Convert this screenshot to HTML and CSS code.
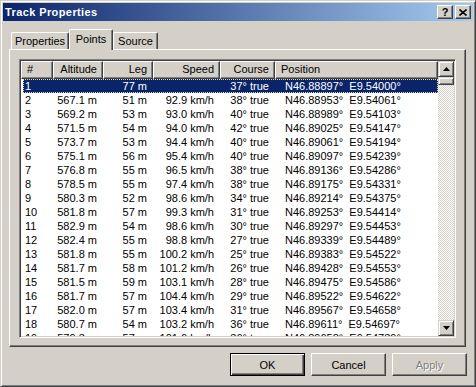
FILE: index.html
```html
<!DOCTYPE html>
<html lang="en">
<head>
    <meta charset="UTF-8">
    <title>Track Properties</title>
    <link rel="stylesheet" href="styles.css">
</head>
<body>
    <div class="window">
        <div class="titlebar">
            <span class="title">Track Properties</span>
            <div class="caption-buttons">
                <div class="cap-btn">?</div>
                <div class="cap-btn">
                    <svg width="8" height="7" viewBox="0 0 8 7"><path d="M0.5 0.5 L7.5 6.5 M7.5 0.5 L0.5 6.5" stroke="#000" stroke-width="1.6" fill="none"/></svg>
                </div>
            </div>
        </div>

        <div class="content">
            <div class="tabs">
                <div class="tab tab-properties">Properties</div>
                <div class="tab tab-points selected">Points</div>
                <div class="tab tab-source">Source</div>
            </div>

            <div class="panel">
                <div class="listview">
                    <div class="list-main">
                        <div class="list-header">
                            <div class="hcell">#</div>
                            <div class="hcell right">Altitude</div>
                            <div class="hcell right">Leg</div>
                            <div class="hcell right">Speed</div>
                            <div class="hcell right">Course</div>
                            <div class="hcell">Position</div>
                        </div>
                        <div class="list-rows" id="rows"></div>
                    </div>
                    <div class="scrollbar">
                        <div class="sb-btn">
                            <svg width="7" height="4" viewBox="0 0 7 4"><polygon points="3.5,0 7,4 0,4" fill="#000"/></svg>
                        </div>
                        <div class="sb-thumb"></div>
                        <div class="sb-track"></div>
                        <div class="sb-btn">
                            <svg width="7" height="4" viewBox="0 0 7 4"><polygon points="0,0 7,0 3.5,4" fill="#000"/></svg>
                        </div>
                    </div>
                </div>
            </div>

            <div class="footer">
                <button class="btn default">OK</button>
                <button class="btn">Cancel</button>
                <button class="btn disabled">Apply</button>
            </div>
        </div>
    </div>

    <script>
    const points = [
        ["1", "", "77 m", "", "37° true", "N46.88897°  E9.54000°"],
        ["2", "567.1 m", "51 m", "92.9 km/h", "38° true", "N46.88953°  E9.54061°"],
        ["3", "569.2 m", "53 m", "93.0 km/h", "40° true", "N46.88989°  E9.54103°"],
        ["4", "571.5 m", "54 m", "94.0 km/h", "42° true", "N46.89025°  E9.54147°"],
        ["5", "573.7 m", "53 m", "94.4 km/h", "40° true", "N46.89061°  E9.54194°"],
        ["6", "575.1 m", "56 m", "95.4 km/h", "40° true", "N46.89097°  E9.54239°"],
        ["7", "576.8 m", "55 m", "96.5 km/h", "38° true", "N46.89136°  E9.54286°"],
        ["8", "578.5 m", "55 m", "97.4 km/h", "38° true", "N46.89175°  E9.54331°"],
        ["9", "580.3 m", "52 m", "98.6 km/h", "34° true", "N46.89214°  E9.54375°"],
        ["10", "581.8 m", "57 m", "99.3 km/h", "31° true", "N46.89253°  E9.54414°"],
        ["11", "582.9 m", "54 m", "98.6 km/h", "30° true", "N46.89297°  E9.54453°"],
        ["12", "582.4 m", "55 m", "98.8 km/h", "27° true", "N46.89339°  E9.54489°"],
        ["13", "581.8 m", "55 m", "100.2 km/h", "25° true", "N46.89383°  E9.54522°"],
        ["14", "581.7 m", "58 m", "101.2 km/h", "26° true", "N46.89428°  E9.54553°"],
        ["15", "581.5 m", "59 m", "103.1 km/h", "28° true", "N46.89475°  E9.54586°"],
        ["16", "581.7 m", "57 m", "104.4 km/h", "29° true", "N46.89522°  E9.54622°"],
        ["17", "582.0 m", "57 m", "103.4 km/h", "31° true", "N46.89567°  E9.54658°"],
        ["18", "580.7 m", "54 m", "103.2 km/h", "36° true", "N46.89611°  E9.54697°"],
        ["19", "579.3 m", "57 m", "101.6 km/h", "36° true", "N46.89658°  E9.54739°"]
    ];

    const rowsEl = document.getElementById("rows");
    const align = ["", "right", "right", "right", "right", "pos"];

    points.forEach((p, i) => {
        const row = document.createElement("div");
        row.className = "row" + (i === 0 ? " selected" : "");
        p.forEach((val, c) => {
            const cell = document.createElement("div");
            cell.className = "cell " + align[c];
            cell.textContent = val;
            row.appendChild(cell);
        });
        rowsEl.appendChild(row);
    });
    </script>
</body>
</html>
```

FILE: styles.css
```css
body {
  margin: 0;
  font-family: "Liberation Sans", Arial, sans-serif;
  font-size: 11px;
  background: #d4d0c8;
}

/* Dialog frame */
.window {
  width: 476px;
  height: 387px;
  box-sizing: border-box;
  background: #d4d0c8;
  border: 1px solid;
  border-color: #d4d0c8 #404040 #404040 #d4d0c8;
  box-shadow: inset 1px 1px #fff, inset -1px -1px #808080;
  padding: 2px;
}

.titlebar {
  height: 18px;
  box-sizing: border-box;
  background: linear-gradient(to right, #0a246a, #a6caf0);
  display: flex;
  align-items: center;
  justify-content: space-between;
  padding: 0 2px 0 2px;
}
.title {
  color: #fff;
  font-weight: bold;
  font-size: 11px;
  letter-spacing: 0.4px;
}
.caption-buttons {
  display: flex;
  gap: 2px;
}
.cap-btn {
  width: 16px;
  height: 14px;
  box-sizing: border-box;
  background: #d4d0c8;
  border: 1px solid;
  border-color: #fff #404040 #404040 #fff;
  box-shadow: inset -1px -1px #808080;
  display: flex;
  align-items: center;
  justify-content: center;
  font-weight: bold;
  font-size: 11px;
  line-height: 1;
  color: #000;
}

/* Tabs + page */
.content {
  padding: 8px 7px 0 6px;
}
.tabs {
  position: relative;
  z-index: 1;
  display: flex;
  align-items: flex-end;
  height: 21px;
  margin-bottom: -1px;
  padding-left: 2px;
}
.tab {
  box-sizing: border-box;
  height: 17px;
  margin-bottom: 1px;
  background: #d4d0c8;
  border-left: 1px solid #fff;
  border-top: 1px solid #fff;
  border-right: 1px solid #404040;
  box-shadow: inset -1px 0 #808080;
  border-radius: 2px 2px 0 0;
  text-align: center;
  line-height: 16px;
}
.tab-properties { width: 58px; }
.tab-points { width: 44px; }
.tab-source { width: 45px; }
.tab.selected {
  height: 21px;
  margin-bottom: 0;
  line-height: 18px;
}

.panel {
  width: 457px;
  height: 298px;
  box-sizing: border-box;
  border: 1px solid;
  border-color: #fff #404040 #404040 #fff;
  box-shadow: inset -1px -1px #808080;
  padding: 9px 0 0 9px;
}

/* List view */
.listview {
  width: 437px;
  height: 279px;
  box-sizing: border-box;
  border: 1px solid;
  border-color: #808080 #fff #fff #808080;
  box-shadow: inset 1px 1px #404040, inset -1px -1px #d4d0c8;
  padding: 1px;
  background: #fff;
  display: flex;
}
.list-main {
  flex: 1;
  display: flex;
  flex-direction: column;
  overflow: hidden;
}
.list-header {
  display: grid;
  grid-template-columns: 32px 50px 50px 67px 55px 1fr;
  height: 18px;
  flex: none;
}
.hcell {
  box-sizing: border-box;
  background: #d4d0c8;
  border: 1px solid;
  border-color: #fff #404040 #404040 #fff;
  box-shadow: inset -1px -1px #808080;
  line-height: 15px;
  padding: 0 5px;
  white-space: nowrap;
  overflow: hidden;
}
.hcell.right { text-align: right; }

.list-rows {
  flex: 1;
  overflow: hidden;
}
.row {
  display: grid;
  grid-template-columns: 30px 50px 50px 67px 55px 1fr;
  height: 14px;
  line-height: 14px;
  margin-left: 2px;
  color: #000;
}
.row.selected {
  background: #0a246a;
  color: #fff;
  outline: 1px dotted #e8dc98;
  outline-offset: -1px;
}
.cell {
  white-space: pre;
  overflow: hidden;
  padding-left: 2px;
}
.cell.right {
  text-align: right;
  padding: 0 6px 0 0;
}
.cell.pos { padding-left: 10px; }

/* Scrollbar */
.scrollbar {
  width: 16px;
  flex: none;
  display: flex;
  flex-direction: column;
  background-color: #fff;
  background-image: repeating-conic-gradient(#d4d0c8 0 25%, #fff 0 50%);
  background-size: 2px 2px;
}
.sb-btn,
.sb-thumb {
  box-sizing: border-box;
  background: #d4d0c8;
  border: 1px solid;
  border-color: #d4d0c8 #404040 #404040 #d4d0c8;
  box-shadow: inset 1px 1px #fff, inset -1px -1px #808080;
}
.sb-btn {
  height: 16px;
  display: flex;
  align-items: center;
  justify-content: center;
}
.sb-thumb { height: 8px; }
.sb-track { flex: 1; }

/* Dialog buttons */
.footer {
  display: flex;
  justify-content: flex-end;
  gap: 6px;
  margin-top: 6px;
  margin-right: -1px;
}
.btn {
  width: 75px;
  height: 23px;
  box-sizing: border-box;
  background: #d4d0c8;
  font-family: inherit;
  font-size: 11px;
  color: #000;
  border: 1px solid;
  border-color: #fff #404040 #404040 #fff;
  box-shadow: inset -1px -1px #808080;
  padding: 0;
}
.btn.default {
  border: 1px solid #000;
  box-shadow: inset 1px 1px #fff, inset -1px -1px #404040, inset -2px -2px #808080;
}
.btn.disabled {
  color: #808080;
  text-shadow: 1px 1px #fff;
}
```
